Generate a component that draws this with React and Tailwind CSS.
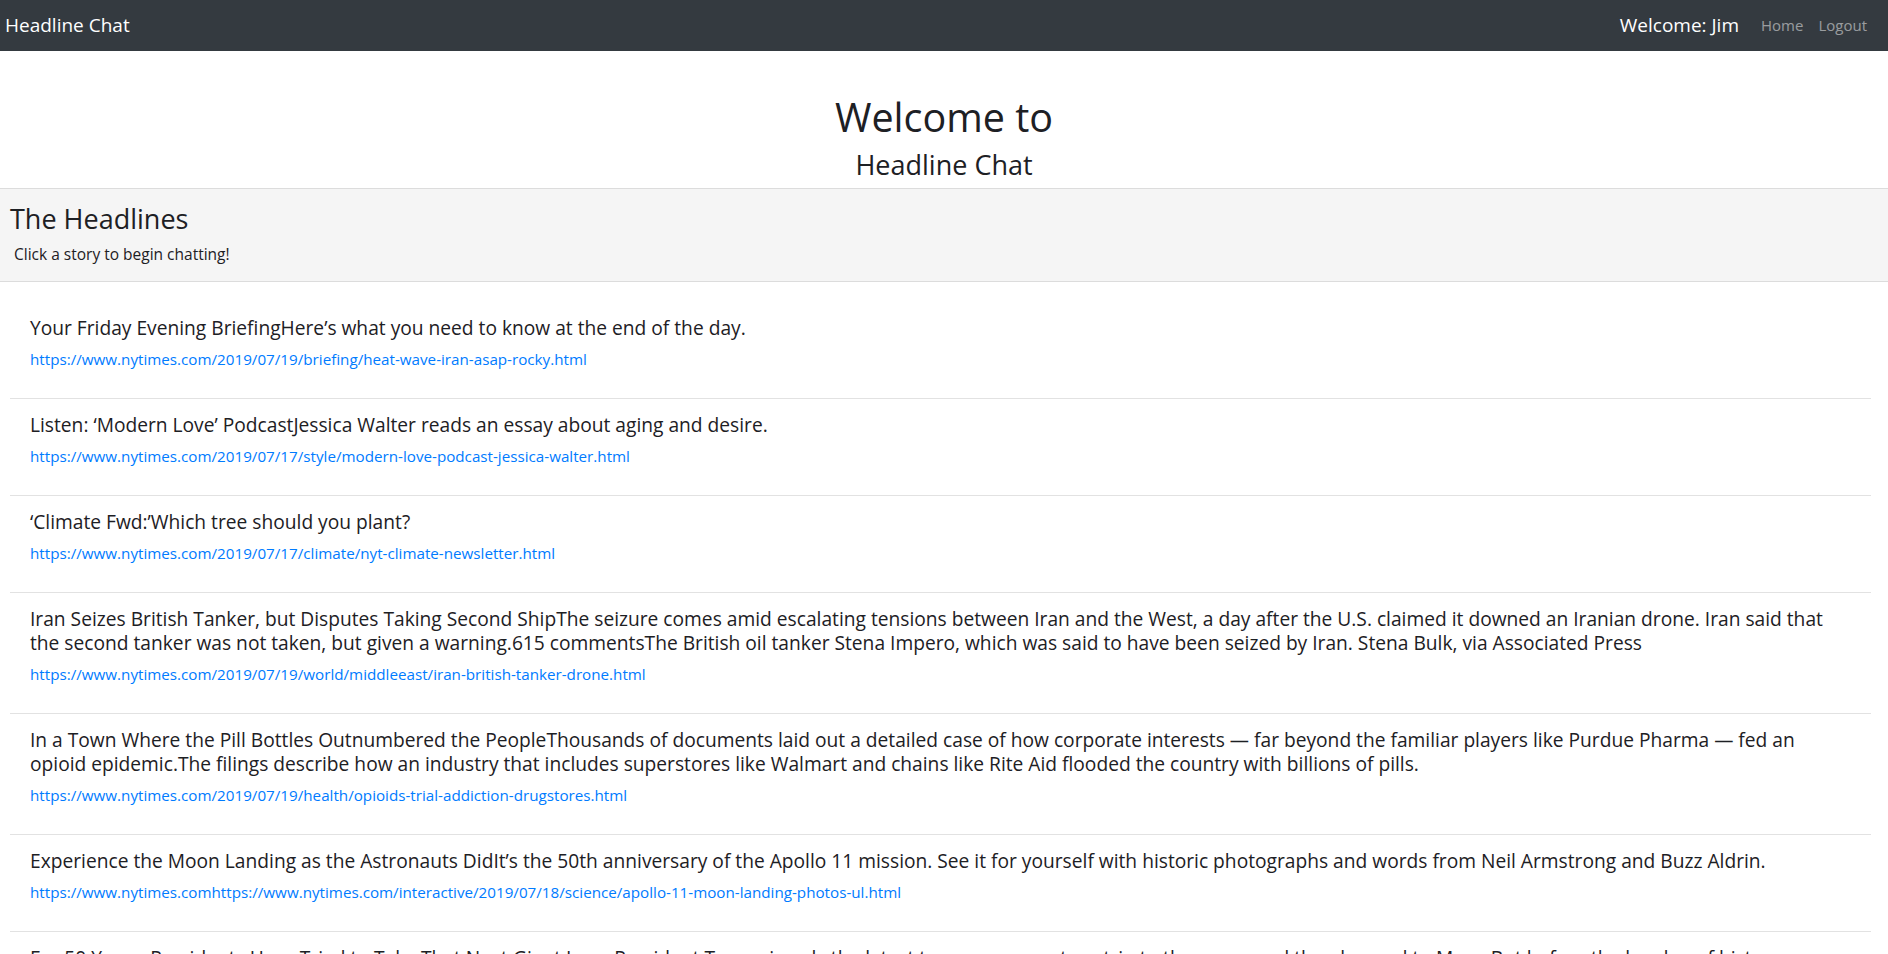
const STORIES = [
  {
    lines: ['Your Friday Evening BriefingHere’s what you need to know at the end of the day.'],
    url: 'https://www.nytimes.com/2019/07/19/briefing/heat-wave-iran-asap-rocky.html',
  },
  {
    lines: ['Listen: ‘Modern Love’ PodcastJessica Walter reads an essay about aging and desire.'],
    url: 'https://www.nytimes.com/2019/07/17/style/modern-love-podcast-jessica-walter.html',
  },
  {
    lines: ['‘Climate Fwd:’Which tree should you plant?'],
    url: 'https://www.nytimes.com/2019/07/17/climate/nyt-climate-newsletter.html',
  },
  {
    lines: [
      'Iran Seizes British Tanker, but Disputes Taking Second ShipThe seizure comes amid escalating tensions between Iran and the West, a day after the U.S. claimed it downed an Iranian drone. Iran said that',
      'the second tanker was not taken, but given a warning.615 commentsThe British oil tanker Stena Impero, which was said to have been seized by Iran. Stena Bulk, via Associated Press',
    ],
    url: 'https://www.nytimes.com/2019/07/19/world/middleeast/iran-british-tanker-drone.html',
  },
  {
    lines: [
      'In a Town Where the Pill Bottles Outnumbered the PeopleThousands of documents laid out a detailed case of how corporate interests — far beyond the familiar players like Purdue Pharma — fed an',
      'opioid epidemic.The filings describe how an industry that includes superstores like Walmart and chains like Rite Aid flooded the country with billions of pills.',
    ],
    url: 'https://www.nytimes.com/2019/07/19/health/opioids-trial-addiction-drugstores.html',
  },
  {
    lines: [
      'Experience the Moon Landing as the Astronauts DidIt’s the 50th anniversary of the Apollo 11 mission. See it for yourself with historic photographs and words from Neil Armstrong and Buzz Aldrin.',
    ],
    url: 'https://www.nytimes.comhttps://www.nytimes.com/interactive/2019/07/18/science/apollo-11-moon-landing-photos-ul.html',
  },
  {
    lines: [
      'For 50 Years, Presidents Have Tried to Take That Next Giant Leap.President Trump is only the latest to vow a new return trip to the moon and then beyond to Mars. But before the burden of history',
      'sets in, consider the record.',
    ],
    url: 'https://www.nytimes.com/2019/07/19/us/politics/moon-landing-presidents.html',
  },
];

export default function App() {
  return (
    <div className="min-h-screen bg-white text-[#1d2024] font-['Open_Sans','Noto_Sans',sans-serif]">
      {/* Navbar */}
      <nav className="h-[51px] bg-[#343a40] flex items-center justify-between pl-[5px] pr-[21px]">
        <a className="text-white text-[19px] leading-none">Headline Chat</a>
        <div className="flex items-center">
          <span className="text-white text-[19px] mr-[22px]">Welcome: Jim</span>
          <a className="text-[15px] text-white/50 mr-[15px]">Home</a>
          <a className="text-[15px] text-white/50">Logout</a>
        </div>
      </nav>

      {/* Hero */}
      <div className="text-center pt-[43px] pb-[6px]">
        <h1 className="text-[39.5px] leading-[1.2] font-medium">Welcome to</h1>
        <h3 className="text-[27px] leading-[1.2] font-medium mt-[8px]">Headline Chat</h3>
      </div>

      {/* Headlines header */}
      <div className="bg-[#f5f5f5] border-y border-[#dcdcdc] pl-[10px] pt-[12px] pb-[16px]">
        <h2 className="text-[27px] leading-[1.3] font-medium">The Headlines</h2>
        <p className="text-[15.5px] leading-[22px] mt-[7px] pl-[4px]">Click a story to begin chatting!</p>
      </div>

      {/* Stories */}
      <div className="pl-[10px] pr-[17px] pt-[20px]">
        {STORIES.map((s, i) => (
          <div key={i} className="border-b border-[#e2e2e2] pl-[20px] pt-[14px] pb-[28px]">
            <h5 className="text-[19.2px] leading-[24px] font-medium whitespace-nowrap">
              {s.lines.map((line, j) => (
                <span key={j} className="block">{line}</span>
              ))}
            </h5>
            <a className="block mt-[9px] text-[15.2px] leading-[21px] text-[#007bff]">{s.url}</a>
          </div>
        ))}
      </div>
    </div>
  );
}
